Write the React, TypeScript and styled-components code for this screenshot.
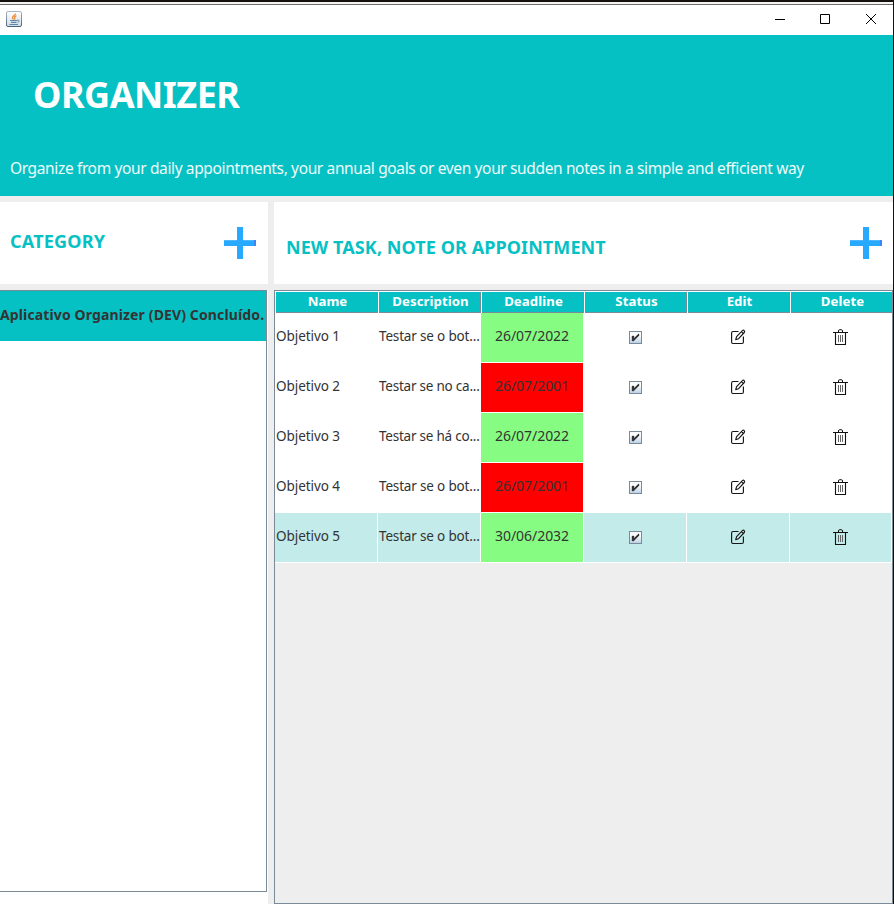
import React from 'react';
import styled, { createGlobalStyle } from 'styled-components';

const TEAL = '#06c1c4';
const EDGE = '#7a8a99';
const GAP = '#eeeeee';

const GlobalStyle = createGlobalStyle`
  * { box-sizing: border-box; }
  body { margin: 0; background: ${GAP}; overflow: hidden; }
`;

const Window = styled.div`
  display: flex;
  flex-direction: column;
  width: 894px;
  height: 904px;
  overflow: hidden;
  border-top: 2px solid #14110f;
  border-right: 1px solid #101010;
  background: ${GAP};
  color: #333333;
  font-family: "Noto Sans", "Open Sans", sans-serif;
`;

const TitleBar = styled.div`
  display: flex;
  align-items: flex-start;
  justify-content: space-between;
  flex: none;
  height: 33px;
  padding: 9px 17px 0 6px;
  background: #fff;
  box-shadow: inset 0 2px #f3f3f3, inset 0 3px #6d6d6d;
  svg { display: block; }
`;

const WindowControls = styled.div`
  display: flex;
  padding-top: 3px;
`;

const ControlIcon = styled.svg<{ $gap: number }>`
  margin-right: ${p => p.$gap}px;
`;

const Banner = styled.header`
  flex: none;
  height: 161px;
  background: ${TEAL};
  color: #fff;
`;

const AppTitle = styled.h1`
  margin: 0;
  padding: 35px 0 0 33px;
  font-size: 36px;
  line-height: 50px;
  font-weight: 700;
  letter-spacing: -0.5px;
`;

const Tagline = styled.p`
  margin: 0;
  padding: 38px 0 0 10px;
  font-size: 15.5px;
  line-height: 20px;
  letter-spacing: -0.365px;
  white-space: nowrap;
  color: #effbfb;
`;

const Columns = styled.main`
  display: grid;
  grid-template-columns: 268px 619px;
  column-gap: 6px;
  height: 708px;
  padding-top: 6px;
`;

const Column = styled.section`
  display: flex;
  flex-direction: column;
  gap: 6px;
  min-height: 0;
`;

const SectionHead = styled.div<{ $left: number; $right: number }>`
  display: flex;
  flex: none;
  align-items: flex-start;
  justify-content: space-between;
  height: 82px;
  padding: 25px ${p => p.$right}px 0 ${p => p.$left}px;
  background: #fff;
  svg { display: block; }
`;

const SectionTitle = styled.h2<{ $drop: number; $spacing: number }>`
  margin: ${p => p.$drop}px 0 0;
  font-size: 18px;
  line-height: 24px;
  font-weight: 700;
  letter-spacing: ${p => p.$spacing}px;
  white-space: nowrap;
  color: ${TEAL};
`;

const ListBackdrop = styled.div`
  flex: 1;
  padding-right: 1px;
  background: #fff;
`;

const CategoryList = styled.div`
  height: 602px;
  border: solid ${EDGE};
  border-width: 1px 1px 1px 0;
  background: #fff;
`;

const CategoryItem = styled.div`
  height: 50px;
  background: ${TEAL};
  font-size: 14px;
  font-weight: 700;
  line-height: 47px;
  letter-spacing: 0.13px;
  white-space: nowrap;
`;

const TablePane = styled.div`
  flex: 1;
  border: 1px solid ${EDGE};
`;

const GridRow = styled.div<{ $selected?: boolean }>`
  display: grid;
  grid-template-columns: repeat(6, 103px);
  width: 617px;
  height: 50px;
  overflow: hidden;
  background: ${p => (p.$selected ? '#c3ebe9' : '#fff')};
`;

const HeaderRow = styled(GridRow)`
  height: 22px;
`;

const HeaderCell = styled.div`
  padding-left: 1px;
  border: solid #fff;
  border-width: 1px 0 0 1px;
  box-shadow: inset -1px -1px ${EDGE};
  background: ${TEAL};
  color: #fff;
  font-size: 13.2px;
  font-weight: 700;
  line-height: 19px;
  letter-spacing: 0.08px;
  text-align: center;
`;

const Cell = styled.div<{ $tone?: string; $center?: boolean; $spacing?: number }>`
  display: flex;
  align-items: center;
  justify-content: ${p => (p.$center ? 'center' : 'flex-start')};
  padding: 0 0 ${p => (p.$tone ? 4 : 3)}px ${p => (p.$tone ? 0 : 1)}px;
  border: solid #fff;
  border-width: 0 1px 1px 0;
  background: ${p => p.$tone || 'transparent'};
  font-size: ${p => (p.$tone ? 14 : 13.5)}px;
  letter-spacing: ${p => p.$spacing ?? 0}px;
  white-space: nowrap;
  overflow: hidden;
  &:last-child { width: 102px; }
`;

const IconCell = styled(Cell)<{ $left: number; $top: number }>`
  align-items: flex-start;
  justify-content: flex-start;
  padding: ${p => p.$top}px 0 0 ${p => p.$left}px;
  svg { display: block; }
`;

const PlusIcon = () => (
  <svg width="32" height="32" viewBox="0 0 32 32" shapeRendering="crispEdges">
    <path d="M13 0h6v13h13v6H19v13h-6V19H0v-6h13z" fill="#27a9ff" />
    <path d="M0 13h13v1H0zM19 13h11v1H19z" fill="#50b8ff" />
    <path d="M30 13h2v6h-2z" fill="#3d85f5" />
  </svg>
);

const JavaIcon = () => (
  <svg width="16" height="16" viewBox="0 0 16 16" fill="none">
    <defs>
      <linearGradient id="javaTile" x1="0" y1="0" x2="0" y2="1">
        <stop stopColor="#ffffff" /><stop offset="1" stopColor="#d2dce3" />
      </linearGradient>
      <linearGradient id="javaRim" x1="0" y1="0" x2="0" y2="1">
        <stop stopColor="#a9b8c3" /><stop offset="1" stopColor="#47627a" />
      </linearGradient>
    </defs>
    <rect x=".5" y=".5" width="15" height="15" rx="1.5" fill="url(#javaTile)" stroke="url(#javaRim)" />
    <path d="M9.5 2.5C10 4 6 5 6.5 6.8c.1.7.8 1 1 1.7M10.5 4.8C8.8 5.4 8.2 6 8.8 6.9c.4.6 0 1.2-.4 1.6" stroke="#e9872b" strokeWidth="1.2" />
    <path d="M4 9.5h7M5 11.4h5.5M3.5 13.5h8.5" stroke="#5d87aa" strokeWidth="1.1" />
    <path d="M11 9.4c3-1 2.8 1.4.5 2" stroke="#5d87aa" />
  </svg>
);

const CheckboxIcon = () => (
  <svg width="13" height="13" viewBox="0 0 13 13">
    <defs>
      <linearGradient id="boxFill" x1="0" y1="0" x2="0" y2="1">
        <stop stopColor="#f4f8fc" /><stop offset=".3" stopColor="#ffffff" /><stop offset="1" stopColor="#b8cfe5" />
      </linearGradient>
    </defs>
    <rect x=".5" y=".5" width="12" height="12" fill="url(#boxFill)" stroke={EDGE} />
    <path d="M3 5h2v2h1V6h1V5h1V4h1V3h1v2H9v1H8v1H7v1H6v1H5v1H3z" fill="#333" stroke="#333" strokeWidth=".35" />
  </svg>
);

const EditIcon = () => (
  <svg width="15" height="16" viewBox="0 0 15 16" fill="none" stroke="#151515" strokeLinejoin="round">
    <path d="M7.5 2.5H2Q.6 2.5 .6 4v9q0 1.5 1.4 1.5h9q1.4 0 1.4-1.5V7.5" strokeWidth="1.15" />
    <path d="M4.7 10.6l.9-3L11.4 1.6q1-.8 1.8.1t.1 1.8L7.6 9.7zM10.5 2.6l2 2" strokeWidth="1.15" />
  </svg>
);

const TrashIcon = () => (
  <svg width="15" height="16" viewBox="0 0 15 16" fill="none" stroke="#111">
    <path d="M0 3.5h15M2.5 3.5v12h10v-12" strokeWidth="1.1" />
    <path d="M5.5 3V2q0-1.3 1.2-1.3h1.6Q9.5.7 9.5 2v1" />
    <path d="M5.5 6v7M7.5 6v7M9.5 6v7" stroke="#555" strokeWidth=".9" />
  </svg>
);

const headings = ['Name', 'Description', 'Deadline', 'Status', 'Edit', 'Delete'];

const tasks = [
  { name: 'Objetivo 1', text: 'Testar se o bot...', date: '26/07/2022', late: false, spacing: -0.17 },
  { name: 'Objetivo 2', text: 'Testar se no ca...', date: '26/07/2001', late: true, spacing: -0.23 },
  { name: 'Objetivo 3', text: 'Testar se há co...', date: '26/07/2022', late: false, spacing: -0.23 },
  { name: 'Objetivo 4', text: 'Testar se o bot...', date: '26/07/2001', late: true, spacing: -0.17 },
  { name: 'Objetivo 5', text: 'Testar se o bot...', date: '30/06/2032', late: false, spacing: -0.17, selected: true },
];

export default function App() {
  return (
    <>
      <GlobalStyle />
      <Window>
        <TitleBar>
          <JavaIcon />
          <WindowControls>
            <ControlIcon $gap={35} width="10" height="11" viewBox="0 0 10 11"><path d="M0 5.5h10" stroke="#000" /></ControlIcon>
            <ControlIcon $gap={36} width="10" height="11" viewBox="0 0 10 11"><path d="M.5.5h9v9h-9z" fill="none" stroke="#000" /></ControlIcon>
            <ControlIcon $gap={0} width="10" height="11" viewBox="0 0 10 11"><path d="M0 0l10 10M10 0L0 10" stroke="#000" /></ControlIcon>
          </WindowControls>
        </TitleBar>
        <Banner>
          <AppTitle>ORGANIZER</AppTitle>
          <Tagline>Organize from your daily appointments, your annual goals or even your sudden notes in a simple and efficient way</Tagline>
        </Banner>
        <Columns>
          <Column>
            <SectionHead $left={10} $right={12}>
              <SectionTitle $drop={2} $spacing={0.2}>CATEGORY</SectionTitle>
              <PlusIcon />
            </SectionHead>
            <ListBackdrop>
              <CategoryList>
                <CategoryItem>Aplicativo Organizer (DEV) Concluído.</CategoryItem>
              </CategoryList>
            </ListBackdrop>
          </Column>
          <Column>
            <SectionHead $left={12} $right={11}>
              <SectionTitle $drop={8} $spacing={0.08}>NEW TASK, NOTE OR APPOINTMENT</SectionTitle>
              <PlusIcon />
            </SectionHead>
            <TablePane>
              <HeaderRow>
                {headings.map(h => <HeaderCell key={h}>{h}</HeaderCell>)}
              </HeaderRow>
              {tasks.map(t => (
                <GridRow key={t.name} $selected={t.selected}>
                  <Cell $spacing={-0.06}>{t.name}</Cell>
                  <Cell $spacing={t.spacing}>{t.text}</Cell>
                  <Cell $center $tone={t.late ? '#ff0000' : '#86fd82'} $spacing={-0.04}>{t.date}</Cell>
                  <IconCell $left={45} $top={18}><CheckboxIcon /></IconCell>
                  <IconCell $left={44} $top={16}><EditIcon /></IconCell>
                  <IconCell $left={43} $top={16}><TrashIcon /></IconCell>
                </GridRow>
              ))}
            </TablePane>
          </Column>
        </Columns>
      </Window>
    </>
  );
}
